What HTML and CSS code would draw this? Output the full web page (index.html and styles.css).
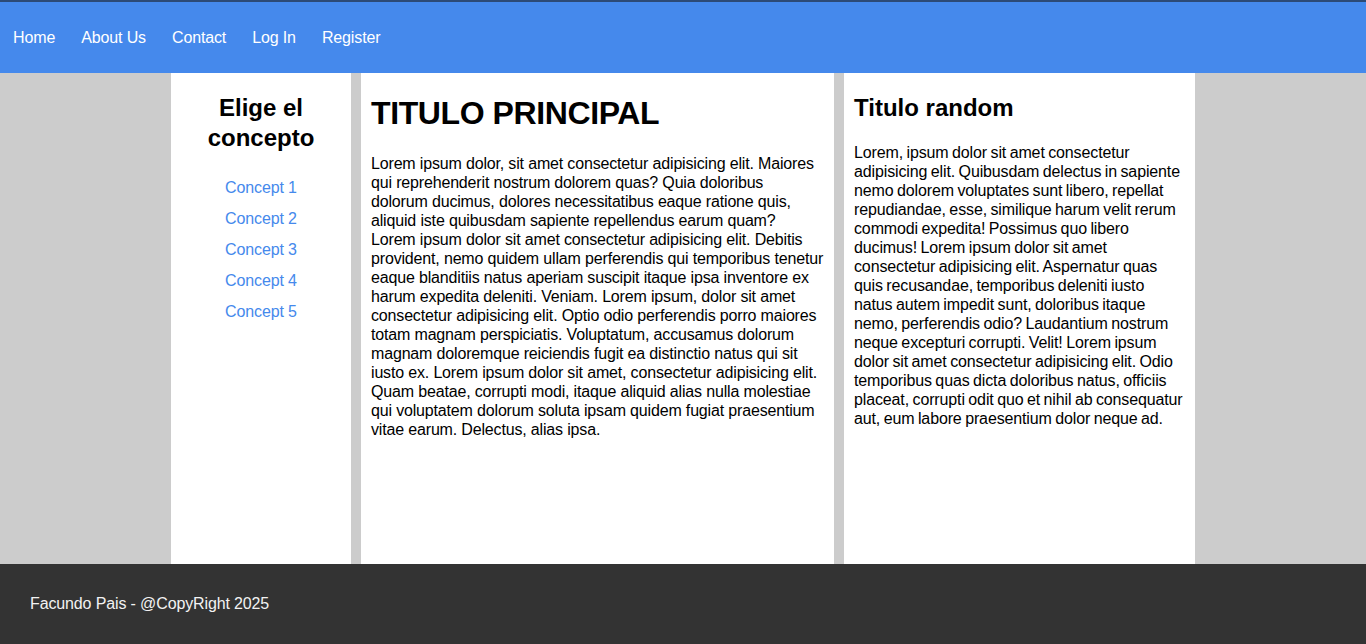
FILE: index.html
```html
<!DOCTYPE html>
<html lang="es">
<head>
<meta charset="utf-8">
<title>Facundo Pais</title>
<link rel="stylesheet" href="styles.css">
</head>
<body>
<header class="topbar">
  <nav>
    <ul class="nav-list">
      <li><a href="#">Home</a></li>
      <li><a href="#">About Us</a></li>
      <li><a href="#">Contact</a></li>
      <li><a href="#">Log In</a></li>
      <li><a href="#">Register</a></li>
    </ul>
  </nav>
</header>
<div class="page">
  <div class="container">
    <aside class="sidebar">
      <h2 class="side-title">Elige el concepto</h2>
      <ul class="concepts">
        <li><a href="#">Concept 1</a></li>
        <li><a href="#">Concept 2</a></li>
        <li><a href="#">Concept 3</a></li>
        <li><a href="#">Concept 4</a></li>
        <li><a href="#">Concept 5</a></li>
      </ul>
    </aside>
    <main class="content">
      <h1>TITULO PRINCIPAL</h1>
      <p>Lorem ipsum dolor, sit amet consectetur adipisicing elit. Maiores qui reprehenderit nostrum dolorem quas? Quia doloribus dolorum ducimus, dolores necessitatibus eaque ratione quis, aliquid iste quibusdam sapiente repellendus earum quam? Lorem ipsum dolor sit amet consectetur adipisicing elit. Debitis provident, nemo quidem ullam perferendis qui temporibus tenetur eaque blanditiis natus aperiam suscipit itaque ipsa inventore ex harum expedita deleniti. Veniam. Lorem ipsum, dolor sit amet consectetur adipisicing elit. Optio odio perferendis porro maiores totam magnam perspiciatis. Voluptatum, accusamus dolorum magnam doloremque reiciendis fugit ea distinctio natus qui sit iusto ex. Lorem ipsum dolor sit amet, consectetur adipisicing elit. Quam beatae, corrupti modi, itaque aliquid alias nulla molestiae qui voluptatem dolorum soluta ipsam quidem fugiat praesentium vitae earum. Delectus, alias ipsa.</p>
    </main>
    <section class="extra">
      <h2>Titulo random</h2>
      <p>Lorem, ipsum dolor sit amet consectetur adipisicing elit. Quibusdam delectus in sapiente nemo dolorem voluptates sunt libero, repellat repudiandae, esse, similique harum velit rerum commodi expedita! Possimus quo libero ducimus! Lorem ipsum dolor sit amet consectetur adipisicing elit. Aspernatur quas quis recusandae, temporibus deleniti iusto natus autem impedit sunt, doloribus itaque nemo, perferendis odio? Laudantium nostrum neque excepturi corrupti. Velit! Lorem ipsum dolor sit amet consectetur adipisicing elit. Odio temporibus quas dicta doloribus natus, officiis placeat, corrupti odit quo et nihil ab consequatur aut, eum labore praesentium dolor neque ad.</p>
    </section>
  </div>
</div>
<footer class="footer">
  <p>Facundo Pais - @CopyRight 2025</p>
</footer>
</body>
</html>
```
FILE: styles.css
```css
* {
  box-sizing: border-box;
}

html, body {
  margin: 0;
  padding: 0;
}

body {
  font-family: "Liberation Sans", Arial, sans-serif;
  font-size: 16px;
  color: #000;
  background: #cccccc;
  letter-spacing: -0.13px;
}

.topbar {
  background: #4589ec;
  border-top: 2px solid #2c4a76;
  height: 73px;
  display: flex;
  align-items: center;
}

.nav-list {
  list-style: none;
  margin: 0;
  padding: 0;
  display: flex;
}

.nav-list a {
  display: block;
  padding: 0 13px;
  color: #fff;
  text-decoration: none;
  line-height: 19px;
}

.page {
  background: #cccccc;
}

.container {
  width: 1024px;
  margin: 0 auto;
  min-height: 491px;
  display: flex;
  gap: 10px;
}

.sidebar {
  width: 180px;
  background: #fff;
  text-align: center;
  padding: 0 10px;
  overflow: hidden;
}

.side-title {
  font-size: 24px;
  line-height: 30px;
  letter-spacing: 0;
  margin: 20px 0 19px;
}

.concepts {
  list-style: none;
  margin: 0;
  padding: 0;
}

.concepts a {
  display: block;
  padding: 6px 0;
  line-height: 19px;
  color: #4589ec;
  text-decoration: none;
}

.content {
  width: 473px;
  background: #fff;
  padding: 0 10px;
  overflow: hidden;
}

.content h1 {
  font-size: 32px;
  letter-spacing: -0.4px;
  margin: 22px 0 22px;
  line-height: 37px;
}

.content p,
.extra p {
  margin: 0;
  line-height: 19px;
}

.content p {
  letter-spacing: -0.165px;
}

.extra p {
  letter-spacing: -0.13px;
  word-spacing: -0.8px;
}

.extra {
  width: 351px;
  background: #fff;
  padding: 0 10px;
  overflow: hidden;
}

.extra h2 {
  font-size: 24px;
  letter-spacing: 0;
  line-height: 28px;
  margin: 21px 0 21px;
}

.footer {
  background: #333333;
  height: 80px;
  display: flex;
  align-items: center;
  padding: 0 30px;
}

.footer p {
  margin: 0;
  color: #f2f2f2;
  line-height: 19px;
  transform: translateY(-1px);
}
```
